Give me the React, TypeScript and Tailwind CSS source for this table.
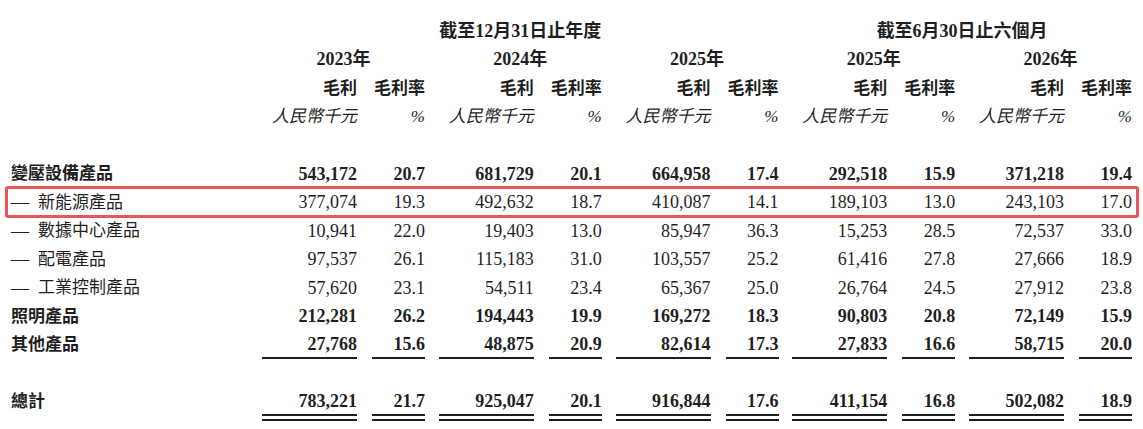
import React from 'react'

type Row = {
  label: string
  sub?: boolean
  bold?: boolean
  values: [string, string][]
  line?: 'single' | 'double'
  highlight?: boolean
}

const rows: Row[] = [
  {
    label: '變壓設備產品',
    bold: true,
    values: [
      ['543,172', '20.7'],
      ['681,729', '20.1'],
      ['664,958', '17.4'],
      ['292,518', '15.9'],
      ['371,218', '19.4'],
    ],
  },
  {
    label: '新能源產品',
    sub: true,
    highlight: true,
    values: [
      ['377,074', '19.3'],
      ['492,632', '18.7'],
      ['410,087', '14.1'],
      ['189,103', '13.0'],
      ['243,103', '17.0'],
    ],
  },
  {
    label: '數據中心產品',
    sub: true,
    values: [
      ['10,941', '22.0'],
      ['19,403', '13.0'],
      ['85,947', '36.3'],
      ['15,253', '28.5'],
      ['72,537', '33.0'],
    ],
  },
  {
    label: '配電產品',
    sub: true,
    values: [
      ['97,537', '26.1'],
      ['115,183', '31.0'],
      ['103,557', '25.2'],
      ['61,416', '27.8'],
      ['27,666', '18.9'],
    ],
  },
  {
    label: '工業控制產品',
    sub: true,
    values: [
      ['57,620', '23.1'],
      ['54,511', '23.4'],
      ['65,367', '25.0'],
      ['26,764', '24.5'],
      ['27,912', '23.8'],
    ],
  },
  {
    label: '照明產品',
    bold: true,
    values: [
      ['212,281', '26.2'],
      ['194,443', '19.9'],
      ['169,272', '18.3'],
      ['90,803', '20.8'],
      ['72,149', '15.9'],
    ],
  },
  {
    label: '其他產品',
    bold: true,
    line: 'single',
    values: [
      ['27,768', '15.6'],
      ['48,875', '20.9'],
      ['82,614', '17.3'],
      ['27,833', '16.6'],
      ['58,715', '20.0'],
    ],
  },
]

const total: Row = {
  label: '總計',
  bold: true,
  line: 'double',
  values: [
    ['783,221', '21.7'],
    ['925,047', '20.1'],
    ['916,844', '17.6'],
    ['411,154', '16.8'],
    ['502,082', '18.9'],
  ],
}

const years = ['2023', '2024', '2025', '2025', '2026']

function Cell({
  children,
  width,
  line,
}: {
  children: React.ReactNode
  width: string
  line?: 'single' | 'double'
}) {
  return (
    <div
      className={
        width +
        ' flex items-center justify-end ' +
        (line === 'single'
          ? 'h-full border-b-2 border-[#1f1f1f]'
          : line === 'double'
            ? 'h-[33px] pt-[2px] border-b-[7px] border-double border-[#1f1f1f]'
            : 'h-full')
      }>
      {children}
    </div>
  )
}

function DataRow({row}: {row: Row}) {
  return (
    <div
      className={
        'relative flex items-start h-[28.5px] ' +
        (row.bold ? 'font-bold' : 'font-normal')
      }>
      {row.highlight && (
        <div className="absolute left-[-6px] right-[4px] top-[-2px] bottom-[-1px] rounded-[3px] border-[3px] border-[#e8555a]" />
      )}
      <div className="w-[251px] shrink-0 flex items-center h-full text-[17px]">
        {row.sub && <span className="w-[27px] inline-block text-[18px]">—</span>}
        <span>{row.label}</span>
      </div>
      <div className="flex gap-x-[13.75px] h-full">
        {row.values.map(([amount, rate], i) => (
          <div key={i} className="flex gap-x-[15px] w-[163px] h-full items-start">
            <Cell width="w-[95px]" line={row.line}>
              {amount}
            </Cell>
            <Cell width="w-[53px]" line={row.line}>
              {rate}
            </Cell>
          </div>
        ))}
      </div>
    </div>
  )
}

export default function App() {
  return (
    <div
      className="w-[1143px] h-[429px] overflow-hidden bg-white pl-[11px] pt-[17px] text-[18px] text-[#1f1f1f]"
      style={{fontFamily: '"Liberation Serif", "Noto Sans CJK TC", serif'}}>
      {/* period titles */}
      <div className="flex h-[28.5px] items-center font-bold">
        <div className="w-[251px] shrink-0" />
        <div className="flex gap-x-[13.75px]">
          <div className="w-[163px]" />
          <div className="w-[163px] text-center whitespace-nowrap">
            截至12月31日止年度
          </div>
          <div className="w-[163px]" />
          <div className="w-[339.75px] text-center whitespace-nowrap">
            截至6月30日止六個月
          </div>
        </div>
      </div>

      {/* years */}
      <div className="flex h-[28.5px] items-center font-bold">
        <div className="w-[251px] shrink-0" />
        <div className="flex gap-x-[13.75px]">
          {years.map((y, i) => (
            <div key={i} className="w-[163px] text-center">
              {y}年
            </div>
          ))}
        </div>
      </div>

      {/* column names */}
      <div className="flex h-[28.5px] items-center font-bold text-[17px]">
        <div className="w-[251px] shrink-0" />
        <div className="flex gap-x-[13.75px]">
          {years.map((_, i) => (
            <div key={i} className="flex gap-x-[15px] w-[163px]">
              <div className="w-[95px] text-right">毛利</div>
              <div className="w-[53px] text-right whitespace-nowrap">毛利率</div>
            </div>
          ))}
        </div>
      </div>

      {/* units */}
      <div className="flex h-[28.5px] items-center italic text-[17px]">
        <div className="w-[251px] shrink-0" />
        <div className="flex gap-x-[13.75px]">
          {years.map((_, i) => (
            <div key={i} className="flex gap-x-[15px] w-[163px]">
              <div className="w-[95px] text-right whitespace-nowrap">人民幣千元</div>
              <div className="w-[53px] text-right">%</div>
            </div>
          ))}
        </div>
      </div>

      <div className="h-[28.75px]" />

      {rows.map((r, i) => (
        <DataRow key={i} row={r} />
      ))}

      <div className="h-[28.5px]" />

      <DataRow row={total} />
    </div>
  )
}
